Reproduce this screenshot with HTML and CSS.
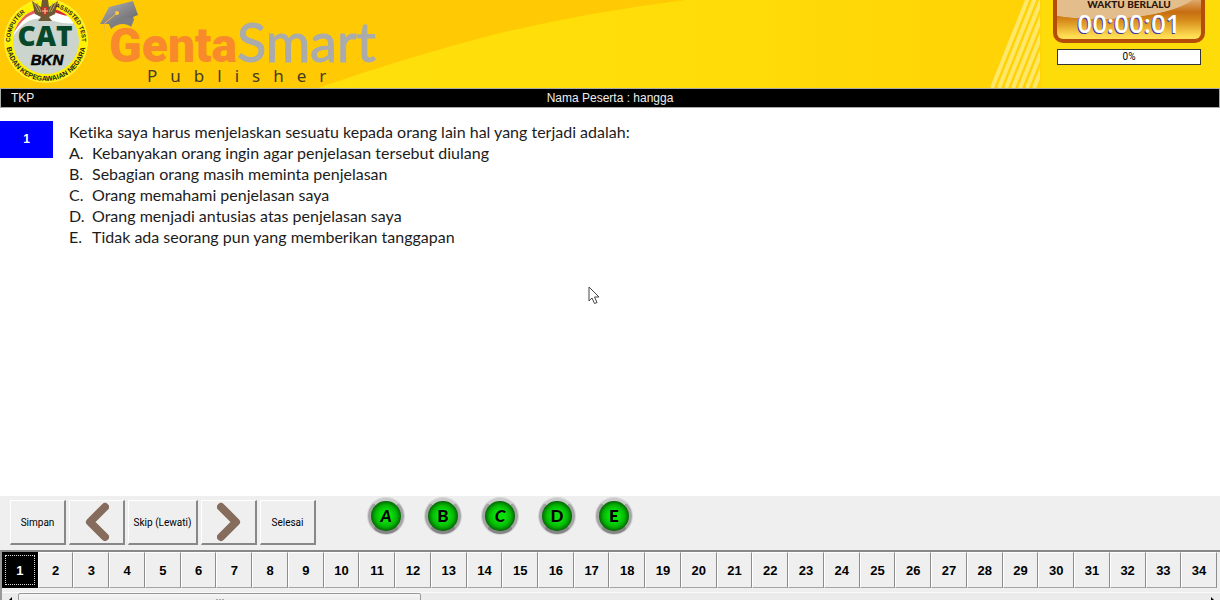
FILE: index.html
```html
<!DOCTYPE html>
<html lang="id">
<head>
<meta charset="utf-8">
<title>CAT BKN - TKP</title>
<link rel="stylesheet" href="styles.css">
</head>
<body>
<header class="banner">
  <svg class="banner-art" viewBox="0 0 1220 88" preserveAspectRatio="none" aria-hidden="true">
    <defs>
      <linearGradient id="sun" x1="0" y1="0" x2="1" y2="0">
        <stop offset="0.25" stop-color="#ffe00c"/><stop offset="0.6" stop-color="#ffdc08"/><stop offset="0.84" stop-color="#ffd205"/><stop offset="0.853" stop-color="#ffd408"/><stop offset="0.854" stop-color="#fddc09"/><stop offset="1" stop-color="#fddc09"/>
      </linearGradient>
      <clipPath id="rays"><rect x="980" y="0" width="60" height="88"/></clipPath>
    </defs>
    <rect width="1220" height="88" fill="url(#sun)"/>
    <path d="M0 0H685Q590 12 500 33Q410 56 318 88H0Z" fill="#ffca03"/>
    <g clip-path="url(#rays)" stroke="#ffe76a" stroke-width="4">
      <path d="M992 88L1028 -2M999 88L1035 -2M1006 88L1042 -2M1013 88L1049 -2M1020 88L1056 -2M1027 88L1063 -2M1034 88L1070 -2"/>
    </g>
  </svg>
  <svg class="seal" width="90" height="88" viewBox="0 0 90 88" role="img" aria-label="Computer Assisted Test BKN">
    <defs>
      <path id="arc-top" d="M10 42A36 36 0 0 1 82 42"/>
      <path id="arc-bottom" d="M6 41A40 40 0 0 0 86 41"/>
      <clipPath id="disc"><circle cx="46" cy="41" r="33"/></clipPath>
    </defs>
    <circle cx="46" cy="41" r="42" fill="#fff04a"/>
    <circle cx="46" cy="41" r="41" fill="#fff200"/>
    <circle cx="46" cy="41" r="33" fill="#cbd5cd"/>
    <g clip-path="url(#disc)">
      <path d="M10 36C18 20 26 10 36 10L60 14C68 16 72 14 80 12V22C66 26 56 21 46 19C32 17 22 22 12 38Z" fill="#fff"/>
      <path d="M10 34C16 20 26 8 36 6V13C26 16 20 22 12 36Z" fill="#e0605c"/>
      <path d="M34 4H60C64 9 70 10 78 10V15C66 18 58 13 52 11L34 12Z" fill="#df2530"/>
    </g>
    <g fill="#6d5a35">
      <path d="M42 0H48L49 7L58 1L55 14L49 17L52 21H38L41 17L35 14L32 1L41 7Z"/>
      <path d="M34 3L39 12M37 3L41 12M56 3L51 12M53 3L49 12" stroke="#bda364" stroke-width="1"/>
      <path d="M42 7H48V12L45 16L42 12Z" fill="#c72e2c"/>
      <path d="M45 8V14M42 11H48" stroke="#f1dba0" stroke-width="1"/>
    </g>
    <g class="seal-ring">
      <text><textPath href="#arc-top" startOffset="0">COMPUTER</textPath></text>
      <text><textPath href="#arc-top" startOffset="100%" text-anchor="end">ASSISTED TEST</textPath></text>
      <text class="seal-lower"><textPath href="#arc-bottom" startOffset="50%" text-anchor="middle">BADAN KEPEGAWAIAN NEGARA</textPath></text>
    </g>
    <text class="seal-cat" x="45" y="46" text-anchor="middle">CAT</text>
    <text class="seal-bkn" x="47" y="65" text-anchor="middle">BKN</text>
  </svg>
  <div class="brand">
    <div class="wordmark"><span class="genta">Genta</span><span class="smart">Smart</span></div>
    <div class="publisher">Publisher</div>
    <svg class="cap" width="42" height="46" viewBox="0 0 42 46" aria-hidden="true">
      <defs><linearGradient id="felt" x1="0" y1="0" x2="1" y2="1"><stop offset="0" stop-color="#b4b4b6"/><stop offset="1" stop-color="#626266"/></linearGradient></defs>
      <path d="M8 22L32 12L34 20L31 27C25 22 17 24 11 29Z" fill="#7d7e81"/>
      <path d="M0 24L9 7L33 1L38 15L30 18L24 16L10 24Z" fill="url(#felt)"/>
      <path d="M17 13L5 23L4 30" fill="none" stroke="#f2b33a" stroke-width="1"/>
      <path d="M3 29L6 29C5 35 6 39 8 44C4 39 2 35 3 29Z" fill="#f8c420"/>
      <circle cx="17" cy="13" r="2" fill="#ffc93f"/>
    </svg>
  </div>
  <div class="clock">
    <div class="clock-face">
      <div class="clock-label">WAKTU BERLALU</div>
      <time class="clock-time">00:00:01</time>
    </div>
    <div class="progress" role="progressbar" aria-valuenow="0" aria-valuemin="0" aria-valuemax="100">0%</div>
  </div>
</header>
<div class="infobar"><span>TKP</span><span>Nama Peserta : hangga</span></div>
<main class="question">
  <div class="number">1</div>
  <div class="body">
    <p>Ketika saya harus menjelaskan sesuatu kepada orang lain hal yang terjadi adalah:</p>
    <dl class="options">
      <dt>A.</dt><dd>Kebanyakan orang ingin agar penjelasan tersebut diulang</dd>
      <dt>B.</dt><dd>Sebagian orang masih meminta penjelasan</dd>
      <dt>C.</dt><dd>Orang memahami penjelasan saya</dd>
      <dt>D.</dt><dd>Orang menjadi antusias atas penjelasan saya</dd>
      <dt>E.</dt><dd>Tidak ada seorang pun yang memberikan tanggapan</dd>
    </dl>
  </div>
  <svg class="pointer" width="12" height="19" viewBox="0 0 12 19" aria-hidden="true"><path d="M1 1V15L4 12L6.500 17.500L9 16.500L6.500 11H11Z" fill="#fff" stroke="#444" stroke-width="1"/></svg>
</main>
<nav class="toolbar" aria-label="Navigasi">
  <div class="actions">
    <button class="action">Simpan</button>
    <button class="action" aria-label="Sebelumnya"><svg class="chevron" width="24" height="40" viewBox="0 0 24 40"><path d="M20 5L5 20L20 35"/></svg></button>
    <button class="action wide">Skip (Lewati)</button>
    <button class="action" aria-label="Berikutnya"><svg class="chevron" width="24" height="40" viewBox="0 0 24 40"><path d="M4 5L19 20L4 35"/></svg></button>
    <button class="action">Selesai</button>
  </div>
  <div class="answers">
    <button class="answer slanted">A</button>
    <button class="answer">B</button>
    <button class="answer slanted">C</button>
    <button class="answer">D</button>
    <button class="answer">E</button>
  </div>
</nav>
<footer class="strip">
  <div class="cells">
    <button class="cell current">1</button><button class="cell">2</button><button class="cell">3</button><button class="cell">4</button><button class="cell">5</button><button class="cell">6</button><button class="cell">7</button><button class="cell">8</button><button class="cell">9</button><button class="cell">10</button><button class="cell">11</button><button class="cell">12</button><button class="cell">13</button><button class="cell">14</button><button class="cell">15</button><button class="cell">16</button><button class="cell">17</button><button class="cell">18</button><button class="cell">19</button><button class="cell">20</button><button class="cell">21</button><button class="cell">22</button><button class="cell">23</button><button class="cell">24</button><button class="cell">25</button><button class="cell">26</button><button class="cell">27</button><button class="cell">28</button><button class="cell">29</button><button class="cell">30</button><button class="cell">31</button><button class="cell">32</button><button class="cell">33</button><button class="cell">34</button>
  </div>
  <div class="scrollbar">
    <button class="arrow" aria-label="Gulir kiri"><svg width="5" height="8" viewBox="0 0 5 8"><path d="M4 0V8L0 4Z"/></svg></button>
    <div class="track"><div class="thumb"><svg width="8" height="6" viewBox="0 0 8 6"><path d="M1 0V6M4 0V6M7 0V6" stroke="#666"/></svg></div></div>
    <button class="arrow" aria-label="Gulir kanan"><svg width="5" height="8" viewBox="0 0 5 8"><path d="M1 0V8L5 4Z"/></svg></button>
  </div>
</footer>
</body>
</html>
```

FILE: styles.css
```css
* { box-sizing: border-box; }
body {
  margin: 0;
  height: 100vh;
  display: flex;
  flex-direction: column;
  overflow: hidden;
  background: #fff;
  color: #000;
  font-family: "Liberation Sans", Arial, sans-serif;
}
button { font: inherit; color: inherit; padding: 0; margin: 0; }

.banner {
  position: relative;
  display: flex;
  flex: none;
  height: 88px;
  overflow: hidden;
  background: #ffd505;
}
.banner-art { position: absolute; inset: 0; width: 100%; height: 100%; }
.seal { position: relative; flex: none; }
.seal-ring { font: bold 6px "Liberation Sans", sans-serif; fill: #222; }
.seal-lower { font-size: 7px; }
.seal-cat { font: 800 28px "Open Sans", sans-serif; fill: #07482b; }
.seal-bkn { font: italic 900 15px "Liberation Sans", sans-serif; fill: #000; stroke: #000; stroke-width: 0.5px; }
.brand { position: relative; padding: 14px 0 0 19px; }
.cap { position: absolute; left: 10px; top: 0; }
.wordmark { display: flex; align-items: baseline; height: 52px; white-space: nowrap; }
.genta { color: #f98a2b; font: 900 48px/56px Roboto, sans-serif; }
.smart { color: #a9abad; font: 54px/56px Lato, sans-serif; -webkit-text-stroke: 1px #a9abad; }
.publisher {
  padding-left: 38px;
  color: #453c20;
  font: 17px/20px "Noto Sans", sans-serif;
  letter-spacing: 13px;
}
.clock { position: relative; width: 152px; margin: 0 15px 0 auto; }
.clock-face {
  height: 43px;
  border: solid #b54d08;
  border-width: 0 4px 4px;
  border-radius: 0 0 10px 10px;
  text-align: center;
  background:
    radial-gradient(ellipse 110px 34px at 30% -12px, #e3bd8b 0 90%, transparent 92%),
    linear-gradient(#e0a868 0, #c66d12 12px, #d58a1a 20px, #ffdc50 36px, #ffe05a);
}
.clock-label { height: 10px; line-height: 8px; font-size: 10px; font-family: Lato, sans-serif; font-weight: 900; color: #2b1408; }
.clock-time {
  display: block;
  font: 600 26px/26px "Open Sans", sans-serif;
  color: #fff;
  text-shadow: -1px 1px 0 #4038a0;
}
.progress {
  height: 16px;
  margin: 6px 4px 0;
  border: 1px solid #333;
  background: #fff;
  font: 10px/14px Roboto, sans-serif;
  text-align: center;
}
.infobar {
  display: grid;
  grid-template-columns: 1fr auto 1fr;
  flex: none;
  height: 20px;
  padding: 0 10px;
  border: 1px solid #a9a9a9;
  background: #000;
  color: #eee;
  font-size: 12px;
  line-height: 19px;
}

.question { position: relative; display: flex; flex: 1; align-items: flex-start; gap: 16px; padding-top: 13px; }
.number {
  width: 53px;
  height: 37px;
  background: #00f;
  color: #fff;
  font-size: 12px;
  font-weight: bold;
  line-height: 37px;
  text-align: center;
}
.body { font: 16px/21px Lato, "Open Sans", sans-serif; font-variant-ligatures: none; color: #1c1c1c; }
.body p { margin: 0; }
.options { display: grid; grid-template-columns: 23px auto; margin: 0; }
.options dd { margin: 0; }
.pointer { position: absolute; left: 588px; top: 178px; }

.toolbar { display: flex; flex: none; gap: 52px; height: 54px; padding: 4px 10px; background: #efefef; }
.actions { display: flex; gap: 3px; }
.action {
  width: 56px;
  height: 45px;
  border: solid;
  border-width: 1px 2px 2px 1px;
  border-color: #fff #888 #888 #fff;
  background: #efefef;
  font: 10px Roboto, sans-serif;
}
.wide { width: 70px; }
.chevron { display: block; margin: 0 auto; fill: none; stroke: #866c5c; stroke-width: 8px; stroke-linecap: round; stroke-linejoin: round; }
.answers { display: flex; gap: 21px; margin-top: -2px; }
.answer {
  width: 36px;
  height: 36px;
  border: 3px solid;
  border-color: #c9c9c9 #a5a5a5 #858585;
  border-radius: 50%;
  background: radial-gradient(circle, #0be00b 0 25%, #04b804 50%, #046004 72%);
  box-shadow: 0 0 0 1px #d4d4d4;
  font: 900 17px/28px Lato, sans-serif;
}
.slanted { font-style: italic; }

.strip { flex: none; height: 50px; border-top: 2px solid #888; border-left: 2px solid #999; background: #efefef; }
.cells { display: flex; padding-right: 3px; }
.cell {
  flex: 1 1 0;
  height: 36px;
  border: 1px solid;
  border-color: #fff #8c8c8c #a5a5a5 #fff;
  background: #efefef;
  font-size: 13px;
  font-weight: bold;
}
.current { background: #000; color: #fff; border-color: #000; outline: 1px dotted #ddd; outline-offset: -4px; }
.scrollbar { display: flex; height: 16px; margin-top: 4px; border-top: 1px solid #fafafa; background: #ebebeb; }
.arrow { flex: none; width: 16px; border: 0; background: none; line-height: 0; }
.track { flex: 1; }
.thumb {
  width: 34%;
  height: 16px;
  border: 1px solid #999;
  border-radius: 2px;
  background: linear-gradient(#f6f6f6, #dedede);
  text-align: center;
  line-height: 11px;
}
```
